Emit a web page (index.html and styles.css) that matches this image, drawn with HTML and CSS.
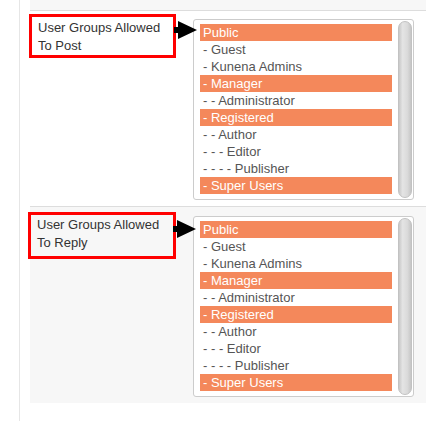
FILE: index.html
```html
<!DOCTYPE html>
<html>
<head>
<meta charset="utf-8">
<link rel="stylesheet" href="styles.css">
</head>
<body>
<div class="page">
  <div class="rail"></div>
  <div class="main">
    <div class="band"></div>
    <div class="row">
      <div class="label-box">
        User Groups Allowed<br>To Post
        <svg class="arrow" width="24" height="19" viewBox="0 0 24 19"><polygon points="0,6 4,6 4,0 23,9 4,18 4,12 0,12" fill="#000"/></svg>
      </div>
      <div class="select">
        <div class="options">
          <div class="opt sel">Public</div>
          <div class="opt">- Guest</div>
          <div class="opt">- Kunena Admins</div>
          <div class="opt sel">- Manager</div>
          <div class="opt">- - Administrator</div>
          <div class="opt sel">- Registered</div>
          <div class="opt">- - Author</div>
          <div class="opt">- - - Editor</div>
          <div class="opt">- - - - Publisher</div>
          <div class="opt sel">- Super Users</div>
        </div>
        <div class="scroll"><div class="thumb"></div></div>
      </div>
    </div>
    <div class="row row--alt">
      <div class="label-box label-box--reply">
        User Groups Allowed<br>To Reply
        <svg class="arrow" width="24" height="19" viewBox="0 0 24 19"><polygon points="0,6 4,6 4,0 23,9 4,18 4,12 0,12" fill="#000"/></svg>
      </div>
      <div class="select">
        <div class="options">
          <div class="opt sel">Public</div>
          <div class="opt">- Guest</div>
          <div class="opt">- Kunena Admins</div>
          <div class="opt sel">- Manager</div>
          <div class="opt">- - Administrator</div>
          <div class="opt sel">- Registered</div>
          <div class="opt">- - Author</div>
          <div class="opt">- - - Editor</div>
          <div class="opt">- - - - Publisher</div>
          <div class="opt sel">- Super Users</div>
        </div>
        <div class="scroll"><div class="thumb"></div></div>
      </div>
    </div>
  </div>
</div>
</body>
</html>
```

FILE: styles.css
```css
html, body {
  margin: 0;
  padding: 0;
  background: #fff;
}
body {
  font-family: "Liberation Sans", Arial, sans-serif;
  font-size: 13px;
  color: #333;
}
.page {
  display: flex;
  min-height: 421px;
}
.rail {
  width: 19px;
  border-right: 1px solid #e6e6e6;
  flex: none;
}
.main {
  flex: 1;
  padding-left: 10px;
}
.band {
  height: 10px;
  background: #f7f7f7;
  border-bottom: 1px solid #dddddd;
}
.row {
  display: flex;
  align-items: flex-start;
  padding: 3px 0 6px 0;
  border-bottom: 1px solid #dddddd;
}
.row--alt {
  background: #f7f7f7;
  border-bottom: none;
  padding-top: 4px;
  padding-bottom: 6px;
}
.label-box {
  position: relative;
  width: 129px;
  margin-left: -1px;
  border: 3px solid #ff0000;
  padding: 2px 6px 0 6px;
  line-height: 18px;
  color: #333;
  flex: none;
}
.label-box--reply {
  margin-left: -2px;
  width: 130px;
  margin-top: 1px;
  padding: 1px 6px 4px 6px;
}
.arrow {
  position: absolute;
  left: 142px;
  top: 4px;
}
.label-box--reply .arrow {
  top: 5px;
}
.select {
  margin-left: 17px;
  margin-top: 5px;
  width: 219px;
  display: flex;
  border: 1px solid #cccccc;
  border-radius: 3px;
  background: #fff;
}
.options {
  width: 192px;
  padding: 4px 0 5px 6px;
}
.opt {
  height: 17px;
  line-height: 17px;
  padding-left: 3px;
  color: #555;
  white-space: nowrap;
}
.opt.sel {
  background: #f4885b;
  color: #fff;
}
.scroll {
  margin-left: 6px;
  width: 14px;
  display: flex;
}
.thumb {
  flex: 1;
  margin: 1px 0 1px 0;
  border-radius: 7px;
  background: linear-gradient(to right, #c8c8c8, #e4e4e4 30%, #dadada 70%, #c6c6c6);
  border: 1px solid #c2c2c2;
}
```
